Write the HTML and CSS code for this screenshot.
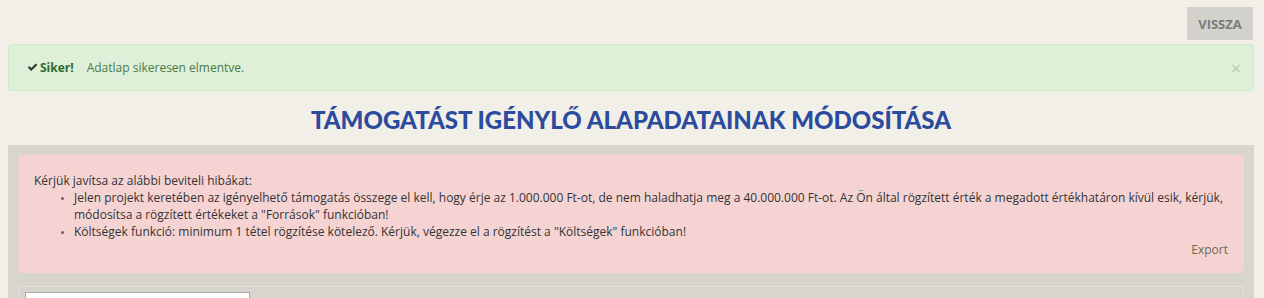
FILE: index.html
```html
<!DOCTYPE html>
<html lang="hu">
<head>
    <meta charset="UTF-8" />
    <title>Támogatást igénylő alapadatainak módosítása</title>
    <link rel="stylesheet" href="styles.css">
</head>
<body>

<div class="toolbar">
    <button class="btn-back">VISSZA</button>
</div>

<div class="alert alert-success">
    <svg class="check" width="11" height="9" viewBox="0 0 11 9"><path d="M0.8 4.6 L2.4 3.1 L4.2 4.9 L8.8 0.4 L10.4 1.9 L4.2 8.1 Z" fill="#2f3a2f"/></svg>
    <strong>Siker!</strong>
    <span class="msg">Adatlap sikeresen elmentve.</span>
    <span class="close">&times;</span>
</div>

<h1 class="page-title">TÁMOGATÁST IGÉNYLŐ ALAPADATAINAK MÓDOSÍTÁSA</h1>

<div class="panel">
    <div class="alert-error">
        <div>Kérjük javítsa az alábbi beviteli hibákat:</div>
        <ul>
            <li>Jelen projekt keretében az igényelhető támogatás összege el kell, hogy érje az 1.000.000 Ft-ot, de nem haladhatja meg a 40.000.000 Ft-ot. Az Ön által rögzített érték a megadott értékhatáron kívül esik, kérjük, módosítsa a rögzített értékeket a "Források" funkcióban!</li>
            <li>Költségek funkció: minimum 1 tétel rögzítése kötelező. Kérjük, végezze el a rögzítést a "Költségek" funkcióban!</li>
        </ul>
        <div class="export"><a href="#">Export</a></div>
    </div>

    <div class="form-box">
        <input class="field" type="text">
    </div>
</div>

</body>
</html>
```

FILE: styles.css
```css
body {
    font-family: "Open Sans", Arial, sans-serif;
    font-size: 12px;
    background-color: #f2efe8;
    color: #333;
    margin: 0;
    padding: 7px 10px 0 8px;
}

.toolbar {
    display: flex;
    justify-content: flex-end;
    margin-right: 1px;
}

.btn-back {
    background-color: #d3d1cb;
    color: #7b7b7b;
    border: none;
    font-family: "Open Sans", Arial, sans-serif;
    font-weight: bold;
    font-size: 13px;
    height: 33px;
    width: 66px;
    padding: 0;
    cursor: pointer;
}

.alert-success {
    display: flex;
    align-items: center;
    margin-top: 4px;
    height: 45px;
    padding: 0 18px;
    background-color: #dff0d8;
    border: 1px solid #d3e8c5;
    border-radius: 4px;
    color: #3c763d;
}

.check {
    margin: 0 2px 0 0;
}

.alert-success strong {
    color: #2f6a2f;
}

.msg {
    margin-left: 13px;
    color: #4a7a4a;
}

.close {
    margin-left: auto;
    font-size: 18px;
    color: #b8c8b5;
    margin-right: -6px;
}

.page-title {
    font-family: "Lato", "DejaVu Sans", sans-serif;
    font-weight: 900;
    font-size: 24px;
    color: #2a4b9e;
    text-align: center;
    margin: 14px 0 10px 0;
    line-height: 30px;
}

.panel {
    background-color: #d7d5cd;
    padding: 10px 10px 0 10px;
    height: 200px;
}

.alert-error {
    background-color: #f5d3d3;
    border-radius: 4px;
    padding: 17px 16px 15px 16px;
    line-height: 17px;
    color: #333;
}

.alert-error ul {
    margin: 0;
    padding-left: 40px;
}

.alert-error li::marker {
    font-size: 8px;
    color: #666;
}

.export {
    text-align: right;
    margin-top: 1px;
}

.export a {
    color: #6b6a55;
    text-decoration: none;
}

.form-box {
    margin-top: 13px;
    border: 1px solid #e3e1da;
    padding: 5px 6px;
    height: 40px;
}

.field {
    width: 219px;
    height: 22px;
    border: 1px solid #aaa;
    background: #fff;
}
```
